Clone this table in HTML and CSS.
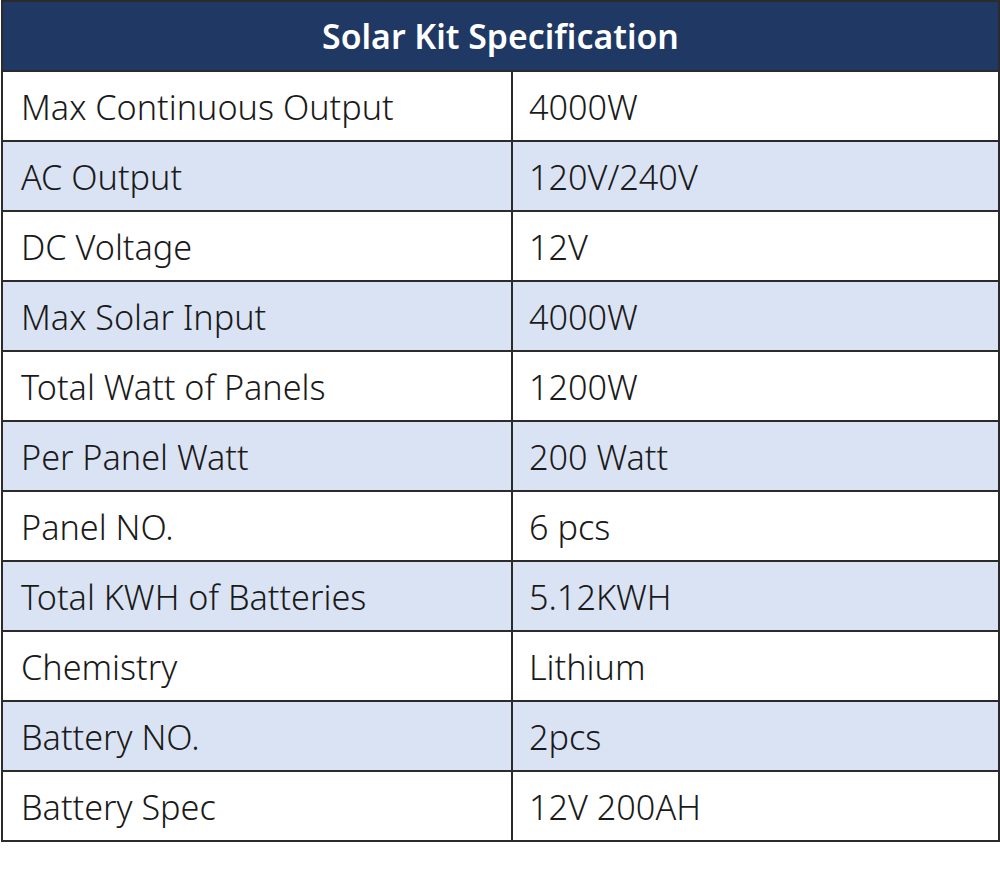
FILE: index.html
```html
<!DOCTYPE html>
<html>
<head>
<meta charset="utf-8">
<link rel="stylesheet" href="styles.css">
</head>
<body>
<table class="spec">
  <thead>
    <tr><th colspan="2" class="title">Solar Kit Specification</th></tr>
  </thead>
  <tbody>
    <tr><td class="k">Max Continuous Output</td><td class="v">4000W</td></tr>
    <tr class="alt"><td class="k">AC Output</td><td class="v">120V/240V</td></tr>
    <tr><td class="k">DC Voltage</td><td class="v">12V</td></tr>
    <tr class="alt"><td class="k">Max Solar Input</td><td class="v">4000W</td></tr>
    <tr><td class="k">Total Watt of Panels</td><td class="v">1200W</td></tr>
    <tr class="alt"><td class="k">Per Panel Watt</td><td class="v">200 Watt</td></tr>
    <tr><td class="k">Panel NO.</td><td class="v">6 pcs</td></tr>
    <tr class="alt"><td class="k">Total KWH of Batteries</td><td class="v">5.12KWH</td></tr>
    <tr><td class="k">Chemistry</td><td class="v">Lithium</td></tr>
    <tr class="alt"><td class="k">Battery NO.</td><td class="v">2pcs</td></tr>
    <tr><td class="k">Battery Spec</td><td class="v">12V 200AH</td></tr>
  </tbody>
</table>
</body>
</html>
```

FILE: styles.css
```css
html, body {
  margin: 0;
  padding: 0;
  background: #ffffff;
}
.spec {
  border-collapse: collapse;
  width: 999px;
  margin-left: 1px;
  font-family: "Noto Sans", "Open Sans", sans-serif;
  color: #1a1a1a;
}
.spec th, .spec td {
  border: 2px solid #2b2b2b;
  padding: 0;
}
.title {
  background: #1f3864;
  color: #ffffff;
  font-size: 33.8px;
  font-weight: 600;
  height: 68px;
  text-align: center;
  vertical-align: middle;
}
.spec td {
  height: 68px;
  font-size: 34.2px;
  font-weight: 300;
  vertical-align: middle;
  text-align: left;
}
.k {
  width: 490px;
  padding-left: 18px !important;
}
.v {
  padding-left: 16px !important;
}
.alt td {
  background: #dae3f3;
}
```
